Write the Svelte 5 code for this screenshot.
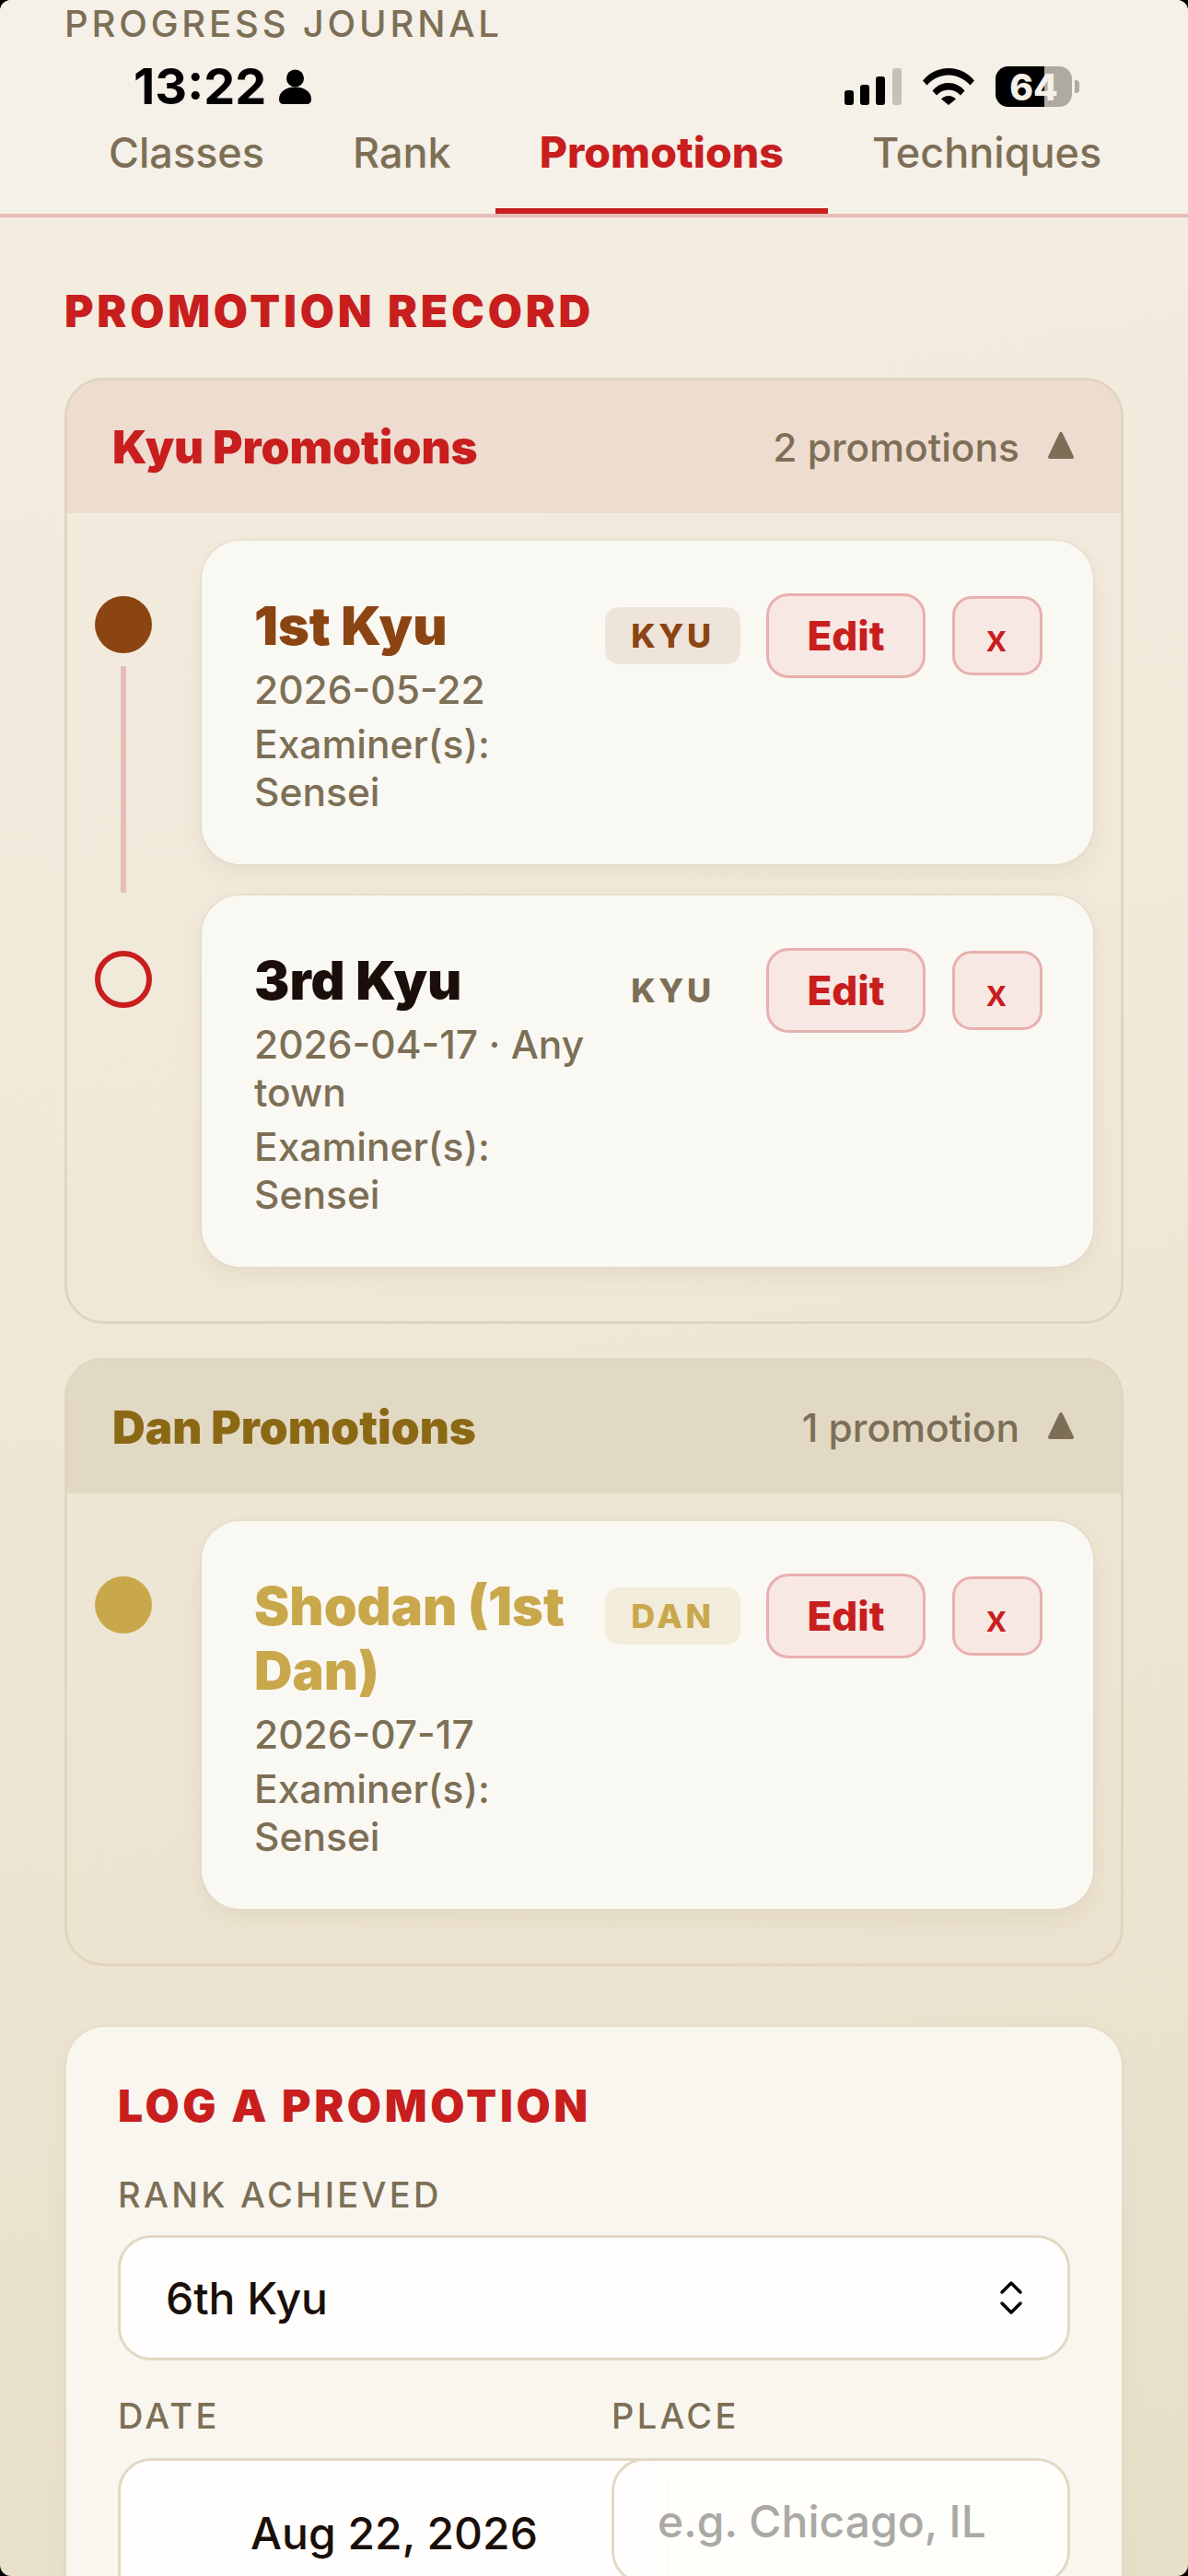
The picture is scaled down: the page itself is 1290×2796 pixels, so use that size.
<script>
    const groups = [
        {
            id: "kyu",
            title: "Kyu Promotions",
            count: "2 promotions",
            items: [
                { rank: "1st Kyu", tone: "brown", kind: "KYU", meta: "2026-05-22", examiner: "Examiner(s): Sensei" },
                { rank: "3rd Kyu", tone: "plain", kind: "KYU", meta: "2026-04-17 · Any town", examiner: "Examiner(s): Sensei" },
            ],
        },
        {
            id: "dan",
            title: "Dan Promotions",
            count: "1 promotion",
            items: [
                { rank: "Shodan (1st Dan)", tone: "gold", kind: "DAN", meta: "2026-07-17", examiner: "Examiner(s): Sensei" },
            ],
        },
    ];

    const tabs = ["Classes", "Rank", "Promotions", "Techniques"];
    let activeTab = $state("Promotions");
    let rank = $state("6th Kyu");
</script>

<div class="screen">
    <div class="status">
        <span class="clock">13:22</span>
        <svg class="person" viewBox="0 0 35 38" width="35" height="38">
            <circle cx="17.5" cy="10" r="9.5" fill="#000" />
            <path d="M0 33c0-9 8-13.500 17.500-13.500S35 24 35 33c0 3-2 5-5 5H5c-3 0-5-2-5-5z" fill="#000" />
        </svg>
        <span class="spacer"></span>
        <svg class="signal" viewBox="0 0 62 40" width="62" height="40">
            <rect x="0" y="24" width="10" height="16" rx="3" fill="#000" />
            <rect x="17" y="18" width="10" height="22" rx="3" fill="#000" />
            <rect x="34" y="9" width="10" height="31" rx="3" fill="#000" />
            <rect x="52" y="0" width="10" height="40" rx="3" fill="#c5c1b9" />
        </svg>
        <svg class="wifi" viewBox="0 0 56 40" width="56" height="40">
            <path d="M0 13.500C7 5 17 0 28 0s21 5 28 13.500l-4.500 5C45 11.500 37 7.500 28 7.500s-17 4-23.500 11z" fill="#000" />
            <path d="M10.500 24.500C15 19 21 16 28 16s13 3 17.500 8.500L41 29.500C37.500 25.500 33 23.500 28 23.500s-9.500 2-13 6z" fill="#000" />
            <path d="M20 33.500c2-2 5-3.500 8-3.500s6 1.500 8 3.500L28 40z" fill="#000" />
        </svg>
        <div class="battery">
            <span class="level"></span>
            <span class="pct">64</span>
        </div>
        <span class="nub"></span>
    </div>

    <header class="top">
        <div class="eyebrow">PROGRESS JOURNAL</div>
        <nav class="tabs">
            {#each tabs as tab}
                <button class="tab" class:active={activeTab === tab} onclick={() => (activeTab = tab)}>{tab}</button>
            {/each}
        </nav>
    </header>

    <main class="content">
        <h2 class="section-title">PROMOTION RECORD</h2>

        {#each groups as group}
            <section class="group {group.id}">
                <div class="group-head">
                    <h3>{group.title}</h3>
                    <span class="count">{group.count}</span>
                    <svg class="caret" viewBox="0 0 30 30" width="30" height="30">
                        <path d="M15 2 L27 27 L3 27 Z" fill="#7d6f56" stroke="#7d6f56" stroke-width="4" stroke-linejoin="round" />
                    </svg>
                </div>
                <div class="timeline">
                    {#each group.items as item, i}
                        <div class="row">
                            <div class="rail">
                                <span class="dot {item.tone}"></span>
                                {#if i < group.items.length - 1}
                                    <span class="line"></span>
                                {/if}
                            </div>
                            <article class="card">
                                <div class="info">
                                    <div class="rank {item.tone}">{item.rank}</div>
                                    <div class="meta">{item.meta}</div>
                                    <div class="examiner">{item.examiner}</div>
                                </div>
                                <span class="badge {item.tone}">{item.kind}</span>
                                <button class="edit">Edit</button>
                                <button class="remove">x</button>
                            </article>
                        </div>
                    {/each}
                </div>
            </section>
        {/each}

        <section class="form-card">
            <h2 class="form-title">LOG A PROMOTION</h2>
            <label class="field-label" for="rank">RANK ACHIEVED</label>
            <div class="select-wrap">
                <select id="rank" bind:value={rank}>
                    <option>6th Kyu</option>
                    <option>5th Kyu</option>
                    <option>4th Kyu</option>
                </select>
                <svg class="chevrons" viewBox="0 0 26 38" width="26" height="38">
                    <path d="M3 13 L13 3 L23 13 M3 25 L13 35 L23 25" fill="none" stroke="#000" stroke-width="3.500" stroke-linecap="round" stroke-linejoin="round" />
                </svg>
            </div>
            <div class="split">
                <div class="col">
                    <label class="field-label" for="date">DATE</label>
                    <input id="date" class="date" value="Aug 22, 2026" readonly />
                </div>
                <div class="col">
                    <label class="field-label" for="place">PLACE</label>
                    <input id="place" class="place" placeholder="e.g. Chicago, IL" />
                </div>
            </div>
        </section>
    </main>
</div>

<style>
    :global(body) {
        margin: 0;
        background: #000;
    }

    .screen {
        position: relative;
        width: 1290px;
        height: 2796px;
        overflow: hidden;
        border-radius: 12px;
        font-family: Inter, "Liberation Sans", sans-serif;
        color: #1a0f0a;
        background: linear-gradient(170deg, #f4eee2 0%, #f0e8d8 45%, #e8dfc9 100%);
    }

    .status {
        position: absolute;
        z-index: 2;
        top: 72px;
        left: 145px;
        width: 1027px;
        height: 44px;
        display: flex;
        align-items: center;
    }

    .clock {
        font-size: 54px;
        font-weight: 700;
        line-height: 44px;
        color: #000;
    }

    .person {
        margin-left: 14px;
    }

    .spacer {
        flex: 1;
    }

    .wifi {
        margin-left: 23px;
    }

    .battery {
        position: relative;
        width: 83px;
        height: 44px;
        margin-left: 23px;
        border-radius: 14px;
        background: #aeaaa2;
        overflow: hidden;
        display: flex;
        align-items: center;
        justify-content: center;
    }

    .level {
        position: absolute;
        left: 0;
        top: 0;
        bottom: 0;
        width: 53px;
        background: #000;
    }

    .pct {
        position: relative;
        font-size: 39px;
        font-weight: 800;
        color: #f5f0e8;
    }

    .nub {
        width: 5px;
        height: 14px;
        margin-left: 3px;
        border-radius: 0 4px 4px 0;
        background: #aeaaa2;
    }

    .top {
        height: 232px;
        box-sizing: content-box;
        padding: 0 47px 0 70px;
        background: #f5f0e8;
        border-bottom: 4px solid #e8bcb8;
        position: relative;
    }

    .eyebrow {
        padding-top: 6px;
        font-size: 40px;
        line-height: 39px;
        font-weight: 500;
        letter-spacing: 3.800px;
        color: #7d6f56;
    }

    .tabs {
        position: absolute;
        left: 70px;
        bottom: 0;
        display: flex;
    }

    .tab {
        height: 106px;
        padding: 0 48px 22px;
        border: 0;
        border-bottom: 6px solid transparent;
        background: none;
        font-family: inherit;
        font-size: 45px;
        font-weight: 500;
        color: #7d6f56;
        white-space: nowrap;
    }

    .tab.active {
        color: #c81e1e;
        font-size: 46.500px;
        font-weight: 800;
        border-bottom-color: #c81e1e;
    }

    .content {
        padding: 80px 70px 0;
    }

    .section-title,
    .form-title {
        margin: 0;
        font-size: 48px;
        line-height: 44px;
        font-weight: 900;
        letter-spacing: 3.800px;
        color: #c81e1e;
    }

    .group {
        margin-top: 37px;
        border: 3px solid #e0d5bf;
        border-radius: 42px;
        overflow: hidden;
    }

    .section-title + .group {
        margin-top: 50px;
    }

    .group-head {
        display: flex;
        align-items: center;
        height: 144px;
        padding: 0 50px 0 49px;
        background: #eedcd0;
    }

    .dan .group-head {
        background: #e2d9c5;
    }

    .group-head h3 {
        flex: 1;
        margin: 0;
        font-size: 49.500px;
        font-weight: 900;
        color: #c81e1e;
    }

    .dan .group-head h3 {
        color: #8b6914;
    }

    .count {
        font-size: 42.500px;
        font-weight: 500;
        color: #7d6f56;
    }

    .caret {
        margin-left: 30px;
        margin-top: -2px;
    }

    .timeline {
        display: flex;
        flex-direction: column;
        gap: 34px;
        padding: 30px 30px 59px 30px;
    }

    .row {
        display: flex;
        gap: 54px;
    }

    .rail {
        flex: none;
        width: 62px;
        padding-top: 60px;
        display: flex;
        flex-direction: column;
        align-items: center;
    }

    .dot {
        flex: none;
        box-sizing: border-box;
        width: 62px;
        height: 62px;
        border-radius: 50%;
    }

    .dot.brown {
        background: #8b4513;
    }

    .dot.plain {
        border: 6px solid #c81e1e;
    }

    .dot.gold {
        background: #c9a84c;
    }

    .line {
        flex: 1;
        width: 6px;
        margin: 14px 0 -31px;
        background: #e8bcb8;
    }

    .card {
        flex: 1;
        min-width: 0;
        display: flex;
        align-items: flex-start;
        padding: 57px 55px 52px 57px;
        border-radius: 42px;
        background: #faf8f3;
        box-shadow: 0 0 0 2px rgba(226, 216, 196, 0.45), 0 9px 24px rgba(100, 80, 40, 0.08);
    }

    .info {
        flex: 1;
        min-width: 0;
    }

    .rank {
        font-size: 57.500px;
        line-height: 70px;
        font-weight: 900;
    }

    .rank.brown {
        color: #8b4513;
    }

    .rank.plain {
        color: #1a0f0a;
    }

    .rank.gold {
        color: #c9a84c;
    }

    .meta,
    .examiner {
        font-size: 42.500px;
        font-weight: 500;
        line-height: 52px;
        color: #7d6f56;
    }

    .meta {
        margin-top: 9px;
    }

    .examiner {
        margin-top: 7px;
    }

    .badge {
        flex: none;
        box-sizing: border-box;
        width: 147px;
        height: 62px;
        margin: 15px 0 0 20px;
        border-radius: 15px;
        font-size: 36px;
        line-height: 62px;
        font-weight: 800;
        letter-spacing: 3.600px;
        text-align: center;
    }

    .badge.brown {
        background: #eee4da;
        color: #8b4513;
    }

    .badge.plain {
        color: #7d6f56;
    }

    .badge.gold {
        background: #f2ecda;
        color: #c9a84c;
    }

    .edit,
    .remove {
        flex: none;
        box-sizing: border-box;
        padding: 0;
        border: 3px solid #e8b0ae;
        background: #f7e8e4;
        font-family: inherit;
        color: #c81e1e;
    }

    .edit {
        width: 173px;
        height: 92px;
        margin-left: 28px;
        border-radius: 24px;
        font-size: 44px;
        font-weight: 800;
    }

    .remove {
        width: 98px;
        height: 86px;
        margin: 3px 0 0 29px;
        border-radius: 21px;
        font-size: 40px;
        font-weight: 600;
        padding: 4px 2px 0 0;
    }

    .form-card {
        margin: 66px 2px 0 2px;
        padding: 68px 56px 0 56px;
        height: 800px;
        border-radius: 42px;
        background: #f9f6f0;
        box-shadow: 0 0 0 2px rgba(226, 216, 196, 0.4), 0 9px 24px rgba(100, 80, 40, 0.05);
    }

    .form-title {
        line-height: 36px;
        letter-spacing: 3.600px;
    }

    .field-label {
        display: block;
        font-size: 38px;
        line-height: 28px;
        font-weight: 500;
        letter-spacing: 3.300px;
        color: #7d6f56;
    }

    .form-title + .field-label {
        margin-top: 64px;
    }

    .select-wrap {
        position: relative;
        margin-top: 30px;
    }

    select,
    input {
        display: block;
        box-sizing: border-box;
        border: 3px solid #e2d8c4;
        font-family: inherit;
        font-weight: 500;
        color: #1a0f0a;
        outline: none;
    }

    select {
        width: 100%;
        height: 136px;
        padding: 0 49px;
        appearance: none;
        background: #fffefc;
        border-radius: 36px;
        font-size: 48px;
    }

    .chevrons {
        position: absolute;
        right: 51px;
        top: 49px;
        pointer-events: none;
    }

    .split {
        display: grid;
        grid-template-columns: minmax(0, 1fr) minmax(0, 1fr);
        gap: 38px;
        margin-top: 46px;
    }

    .col .field-label {
        margin-bottom: 32px;
    }

    input {
        border-radius: 36px;
        font-size: 48px;
    }

    .date {
        width: 600px;
        height: 162px;
        background: #fffefc;
        text-align: center;
    }

    .place {
        position: relative;
        width: 100%;
        height: 137px;
        padding: 0 47px;
        background: rgba(255, 254, 252, 0.92);
    }

    .place::placeholder {
        color: #aaa9a6;
    }
</style>
